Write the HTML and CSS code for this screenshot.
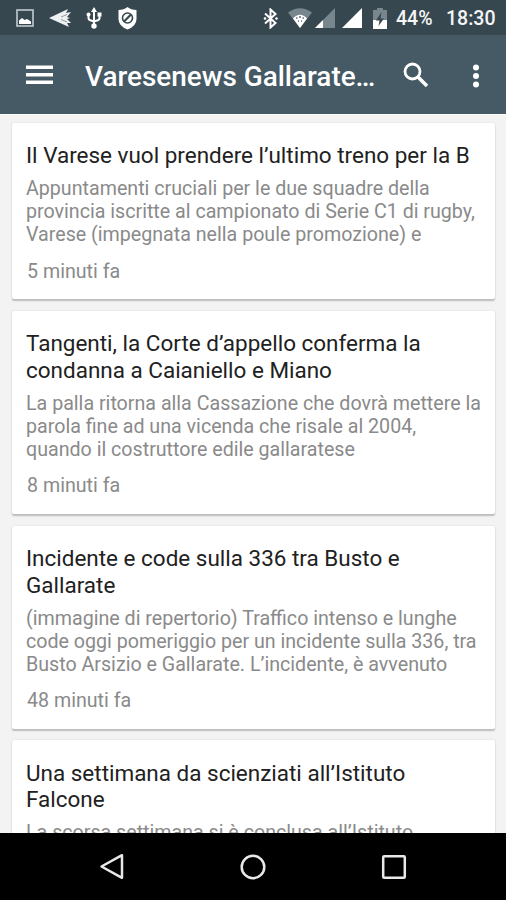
FILE: index.html
```html
<!DOCTYPE html>
<html lang="it">
<head>
<meta charset="utf-8">
<title>Varesenews Gallarate</title>
<link rel="stylesheet" href="styles.css">
</head>
<body>
<div class="screen">
  <header class="status">
    <svg class="i-pic" width="18" height="18" viewBox="0 0 18 18"><rect x="1" y="1" width="16" height="16" fill="none" stroke="#b9c3c8" stroke-width="1.7"/><path d="M3 15v-3.500l3-2.500 2.500 2 2.500-1 4 2.500v2.500z" fill="#fff"/></svg>
    <svg class="i-plane" width="22" height="18" viewBox="0 0 22 18"><path d="M0 9 19 0 17 4 22 3 18 8 21 9 18 10 22 14 18 14 20 18z" fill="#eef1f2"/><path d="M12 8 18 5.500M12 10.500 18 13" stroke="#75858c" stroke-width=".8"/></svg>
    <svg class="i-usb" width="16" height="22" viewBox="0 0 16 22"><path d="M8 3v16M2.500 7v4q0 2 2.500 2.500l3 1M13.500 7v4q0 2-2.500 2.500l-3 1" fill="none" stroke="#fff" stroke-width="2"/><path d="M8 0 11 5H5z" fill="#fff"/><circle cx="2.500" cy="7.500" r="2" fill="#fff"/><rect x="11.500" y="5.500" width="4" height="4" fill="#fff"/><circle cx="8" cy="19" r="2.700" fill="#fff"/></svg>
    <svg class="i-shield" width="19" height="23" viewBox="0 0 19 23"><path d="M9.500 0Q13 3 18.500 3v9q0 7-9 10.500Q.5 19 .5 12V3Q6 3 9.500 0z" fill="#fff"/><circle cx="9.500" cy="11" r="5" fill="none" stroke="#37474f" stroke-width="1.600"/><path d="M6 14.500 13 7.500" stroke="#37474f" stroke-width="2.200"/></svg>
    <svg class="i-bt" width="15" height="21" viewBox="0 0 15 21"><path d="M2 5.500 12.500 15 7.500 19.500V1.500L12.500 6 2 15.500" fill="none" stroke="#fff" stroke-width="2"/><circle cx="2" cy="10.500" r="1.300" fill="#fff"/><circle cx="13.500" cy="10.500" r="1.300" fill="#fff"/></svg>
    <svg class="i-wifi" width="24" height="20" viewBox="0 0 24 20"><path d="M0 4.500Q12-4 24 4.500L12 20z" fill="#78868d"/><path d="M5 10.500Q12 3 19 10.500L12 20z" fill="#fff"/><path d="M8 10h1.500M11 9h2M14.500 10H16M10 13h1M13 13h1" stroke="#607078" stroke-width="1.300"/></svg>
    <svg class="i-sig1" width="20" height="20" viewBox="0 0 20 20"><path d="M0 20 20 0V20z" fill="#78868d"/><path d="M0 20 8 12V20z" fill="#fff"/></svg>
    <svg class="i-sig2" width="20" height="20" viewBox="0 0 20 20"><path d="M0 20 20 0V20z" fill="#fff"/></svg>
    <svg class="i-bat" width="14" height="21" viewBox="0 0 14 21"><path d="M0 2H4V0h6v2h4v10H0z" fill="#78868d"/><path d="M0 12h14v9H0z" fill="#fff"/><path d="M8.500 4 3 12.500h3.500L5.500 18 11 10.500H7.500z" fill="#37474f"/></svg>
    <span class="pct">44%</span>
    <span class="clock">18:30</span>
  </header>
  <div class="bar">
    <svg class="i-menu" width="27" height="20" viewBox="0 0 27 20"><path d="M0 2.200h27M0 9.700h27M0 17.200h27" stroke="#fff" stroke-width="3.400"/></svg>
    <h1>Varesenews Gallarate…</h1>
    <svg class="i-search" width="26" height="26" viewBox="0 0 26 26"><circle cx="9.500" cy="9.500" r="7.500" fill="none" stroke="#fff" stroke-width="2.800"/><path d="M14.500 14.500 24 24" stroke="#fff" stroke-width="3.600"/></svg>
    <svg class="i-more" width="8" height="24" viewBox="0 0 8 24"><g fill="#fff"><circle cx="4" cy="3.500" r="3"/><circle cx="4" cy="12" r="3"/><circle cx="4" cy="20.500" r="3"/></g></svg>
  </div>
  <main class="feed">
    <article class="card">
      <h2>Il Varese vuol prendere l’ultimo treno per la B</h2>
      <p>Appuntamenti cruciali per le due squadre della<br>provincia iscritte al campionato di Serie C1 di rugby,<br>Varese (impegnata nella poule promozione) e</p>
      <time>5 minuti fa</time>
    </article>
    <article class="card">
      <h2>Tangenti, la Corte d’appello conferma la<br>condanna a Caianiello e Miano</h2>
      <p>La palla ritorna alla Cassazione che dovrà mettere la<br>parola fine ad una vicenda che risale al 2004,<br>quando il costruttore edile gallaratese</p>
      <time>8 minuti fa</time>
    </article>
    <article class="card">
      <h2>Incidente e code sulla 336 tra Busto e<br>Gallarate</h2>
      <p>(immagine di repertorio) Traffico intenso e lunghe<br>code oggi pomeriggio per un incidente sulla 336, tra<br>Busto Arsizio e Gallarate. L’incidente, è avvenuto</p>
      <time>48 minuti fa</time>
    </article>
    <article class="card">
      <h2>Una settimana da scienziati all’Istituto<br>Falcone</h2>
      <p>La scorsa settimana si è conclusa all’Istituto</p>
    </article>
  </main>
  <nav class="nav">
    <svg class="n-back" width="26" height="27" viewBox="0 0 26 27"><path d="M2.500 13.500 23 2.200V24.800z" fill="none" stroke="#e8e8e8" stroke-width="2.500" stroke-linejoin="round"/></svg>
    <svg class="n-home" width="26" height="26" viewBox="0 0 26 26"><circle cx="13" cy="13" r="11.300" fill="none" stroke="#e8e8e8" stroke-width="2.500"/></svg>
    <svg class="n-recent" width="26" height="26" viewBox="0 0 26 26"><rect x="2.200" y="2.200" width="21.600" height="21.600" rx="1" fill="none" stroke="#e8e8e8" stroke-width="2.500"/></svg>
  </nav>
</div>
</body>
</html>
```
FILE: styles.css
```css
* { box-sizing: border-box; }
body { margin: 0; font-family: Roboto, sans-serif; background: #f3f3f3; }
svg { display: block; flex: none; }
h1, h2, p { margin: 0; font-weight: 400; white-space: nowrap; }
.screen { width: 506px; height: 900px; display: flex; flex-direction: column; overflow: hidden; }
.status { height: 35px; flex: none; background: #37474f; display: flex; align-items: center; padding: 2px 0 0 16px; color: #f4f6f7; }
.i-pic { margin-top: -1px; }
.i-plane { margin-left: 15px; margin-top: -1px; }
.i-usb { margin-left: 15px; margin-top: -1px; }
.i-shield { margin-left: 16px; margin-top: -1px; }
.i-bt { margin-left: 126px; margin-top: -1px; }
.i-wifi { margin-left: 10px; margin-top: -1px; }
.i-sig1 { margin-left: 3px; margin-top: -1px; }
.i-sig2 { margin-left: 7px; margin-top: -1px; }
.i-bat { margin-left: 11px; margin-top: -1px; }
.pct { margin-left: 9px; width: 38px; font-size: 19.500px; font-weight: 500; }
.clock { margin-left: 12px; font-size: 19.500px; font-weight: 500; }
.bar { height: 79px; flex: none; background: #455a64; display: flex; align-items: center; padding-left: 26px; color: #fff; }
.bar h1 { margin-left: 32px; width: 319px; font-size: 27.900px; font-weight: 500; line-height: 36px; padding-top: 4px; height: 40px; }
.i-menu { margin-top: 1px; }
.i-more { margin-left: 43px; margin-top: 2px; }
.i-search { margin-left: -1px; }
.feed { height: 719px; flex: none; overflow: hidden; padding: 8px 11px 0 12px; display: flex; flex-direction: column; gap: 11.600px; border-top: 1px solid #fff; background: #f3f3f3; }
.card { flex: none; background: #fff; border-radius: 2px; padding: 19.200px 0 16.600px 14px; box-shadow: 0 1.500px 1.500px #bdbdbd, 0 0 2px #dedede; }
.card h2 { font-size: 22.470px; line-height: 26.700px; color: #212121; }
.card p { margin-top: 8.400px; font-size: 19.650px; line-height: 23px; color: #8a8a8a; }
.card time { display: block; margin: 13.500px 0 0 1px; font-size: 19.650px; line-height: 23px; color: #8a8a8a; }
.nav { flex: 1; background: #000; display: flex; align-items: center; justify-content: center; gap: 115px; }
```
